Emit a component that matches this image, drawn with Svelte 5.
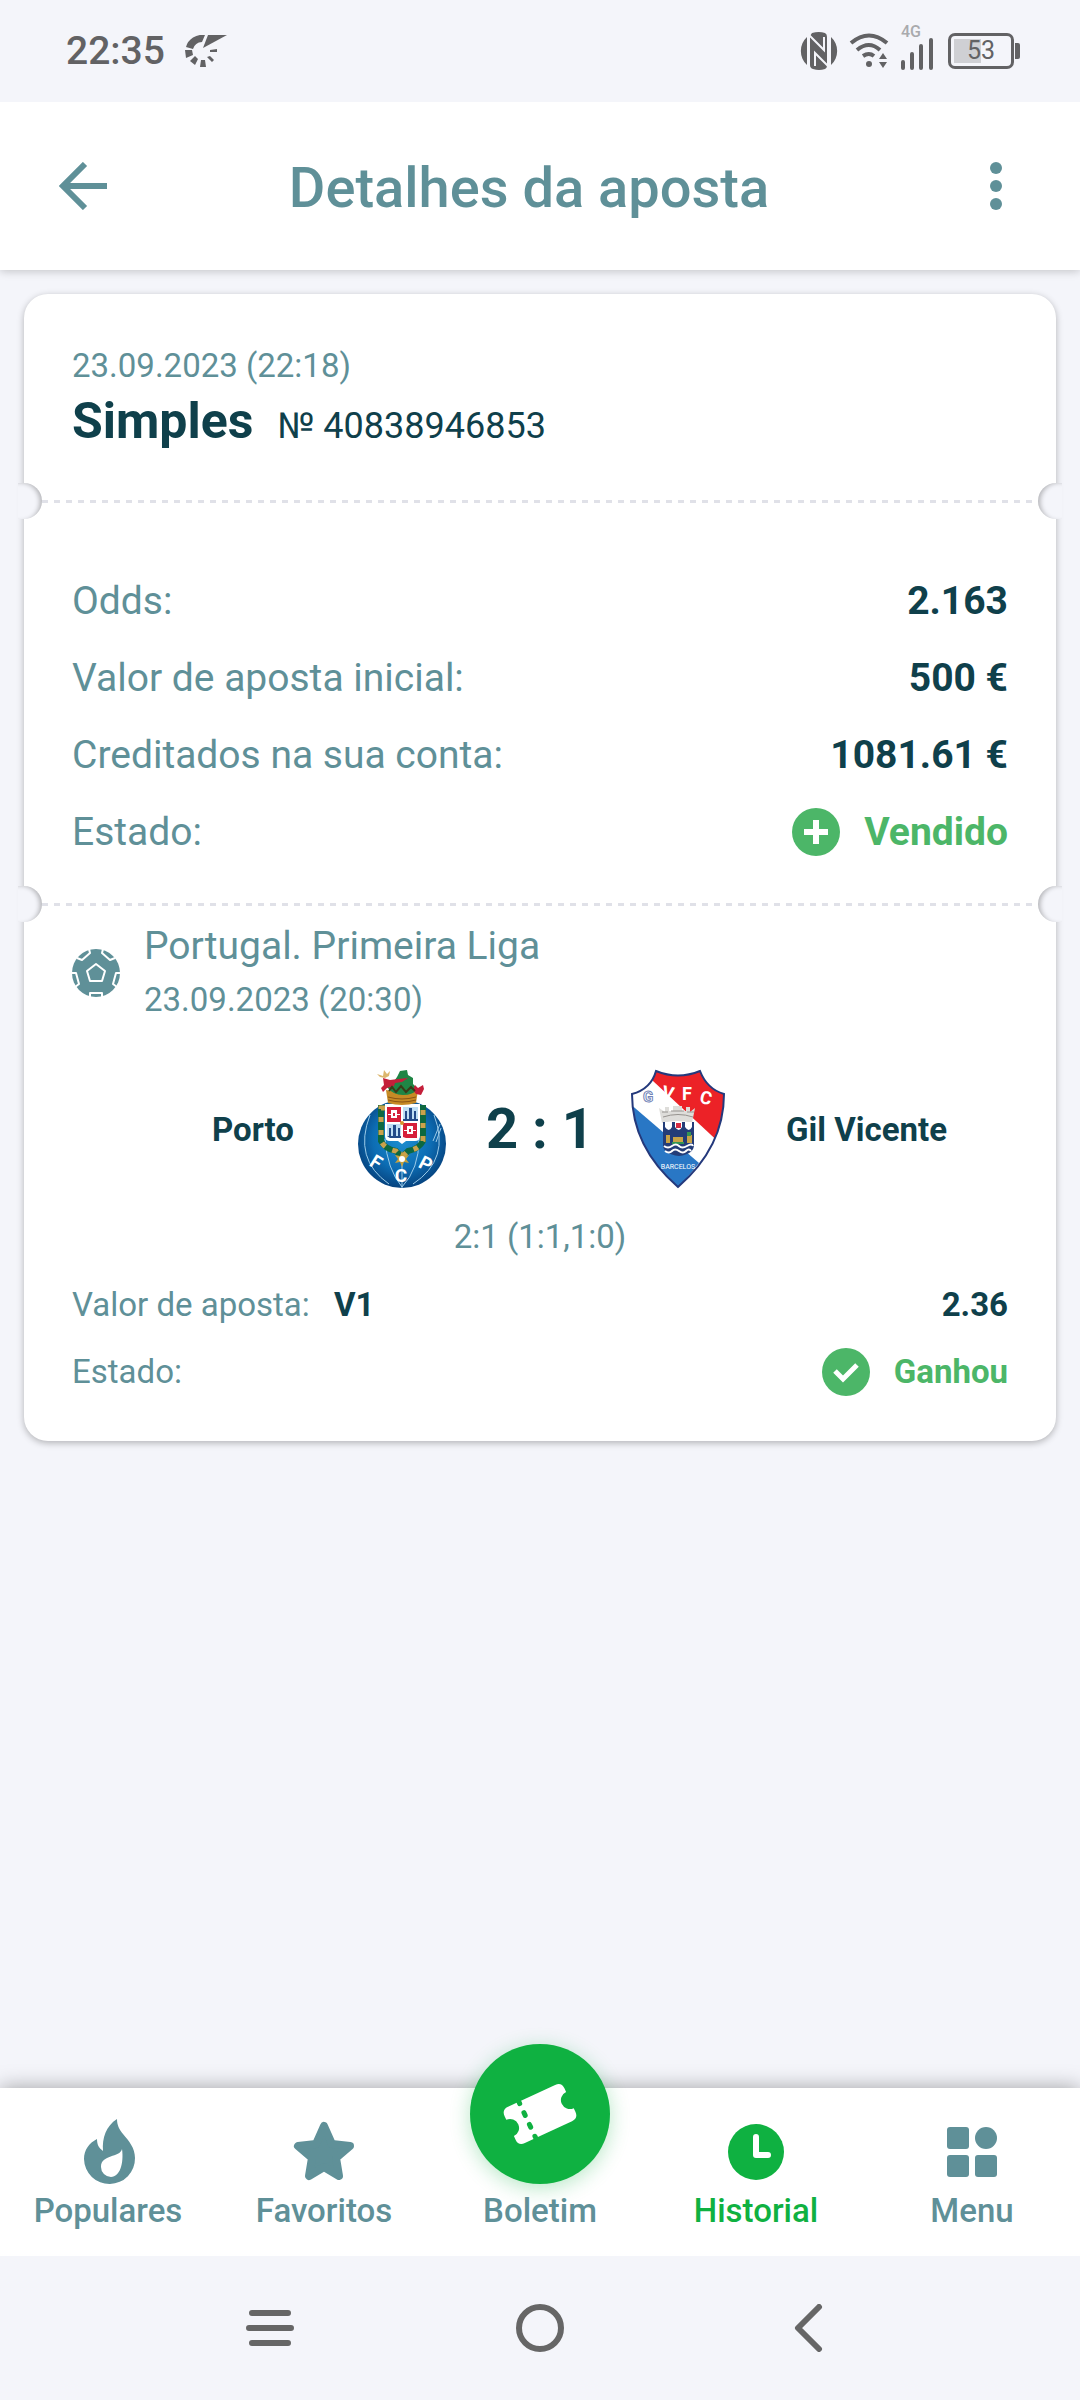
<script lang="ts">
	const bet = {
		date: '23.09.2023 (22:18)',
		type: 'Simples',
		number: '№ 40838946853'
	};

	const summary = [
		{ label: 'Odds:', value: '2.163' },
		{ label: 'Valor de aposta inicial:', value: '500 €' },
		{ label: 'Creditados na sua conta:', value: '1081.61 €' }
	];

	const tabs = [
		{ id: 'popular', label: 'Populares' },
		{ id: 'favorites', label: 'Favoritos' },
		{ id: 'slip', label: 'Boletim' },
		{ id: 'history', label: 'Historial' },
		{ id: 'menu', label: 'Menu' }
	];

	let activeTab = $state('history');
</script>

{#snippet divider()}
	<div class="divider">
		<span class="notch left"></span>
		<span class="dashes"></span>
		<span class="notch right"></span>
	</div>
{/snippet}

<div class="page">
	<div class="status-bar">
		<span class="clock">22:35</span>
		<svg class="app-icon" width="42" height="32" viewBox="0 0 42 32" fill="#626264">
			<path d="M23 0h19L18 13z" />
			<path d="M20 0A17 16 0 0 0 1 12l7 2A10 10 0 0 1 17 7z" />
			<path d="M0 15h7l1 5-7 3zM5 26l5-5 3 3-3 6zM16 25h4l1 7h-6zM22 22l3-1 4 4-2 2zM25 15l7-1v3l-7 0z" />
		</svg>
		<div class="status-icons">
			<svg width="38" height="38" viewBox="0 0 38 38">
				<path fill="#626264" d="M7 5v28A19 19 0 0 1 7 5zM31 5v28A19 19 0 0 0 31 5z" />
				<path fill="#626264" d="M12 1Q19-1 25 1 27 2 27 5V34Q27 36 25 37 19 39 13 37 10 36 10 33V4z" />
				<path fill="none" stroke="#f4f5fa" stroke-width="2" d="M9 3l15 15V5M28 34L15 21v13" />
			</svg>
			<svg width="40" height="38" viewBox="0 0 40 38" fill="none" stroke="#626264" stroke-width="4">
				<path d="M2 11Q20-4 38 11M8 18Q20 8 31 18M14 24Q20 20 25 24" />
				<circle cx="20" cy="32" r="3" fill="#626264" stroke="none" />
				<path fill="#626264" stroke="none" d="M30 27l4-6 4 6zM30 30h8l-4 6z" />
			</svg>
			<div class="signal">
				<span>4G</span>
				<svg width="34" height="32" viewBox="0 0 34 32" stroke="#626264" stroke-width="4" stroke-linecap="round">
					<path d="M3 24v6M12 16v14M21 8v22M31 2v28" />
				</svg>
			</div>
			<div class="battery"><span>53</span></div>
		</div>
	</div>

	<header>
		<button class="back" aria-label="Voltar">
			<svg width="48" height="48" viewBox="0 0 48 48" fill="none" stroke="#5f9098" stroke-width="6">
				<path d="M48 24H5M26 2L4 24l22 22" />
			</svg>
		</button>
		<h1>Detalhes da aposta</h1>
		<button class="more" aria-label="Mais opções">
			<svg width="12" height="48" viewBox="0 0 12 48" fill="#5f9098">
				<circle cx="6" cy="6" r="6" />
				<circle cx="6" cy="24" r="6" />
				<circle cx="6" cy="42" r="6" />
			</svg>
		</button>
	</header>

	<main>
		<article class="ticket">
			<section class="heading">
				<p class="small">{bet.date}</p>
				<div class="bet-name">
					<h2>{bet.type}</h2>
					<span>{bet.number}</span>
				</div>
			</section>

			{@render divider()}

			<dl class="summary">
				{#each summary as row}
					<div class="row">
						<dt>{row.label}</dt>
						<dd>{row.value}</dd>
					</div>
				{/each}
				<div class="row">
					<dt>Estado:</dt>
					<dd class="state">
						<svg width="48" height="48" viewBox="0 0 48 48">
							<circle cx="24" cy="24" r="24" fill="#4cb668" />
							<path d="M24 12v24M12 24h24" stroke="#fff" stroke-width="6" />
						</svg>
						Vendido
					</dd>
				</div>
			</dl>

			{@render divider()}

			<section class="event">
				<div class="league">
					<svg width="48" height="48" viewBox="0 0 48 48">
						<circle cx="24" cy="24" r="24" fill="#5f9098" />
						<g fill="none" stroke="#fff" stroke-width="2" stroke-linejoin="round">
							<path d="M24 15l9 7-3 10H18l-3-10z" />
							<path d="M17 0l1 4-8 7-5-2M31 0l-1 4 8 7 5-2M0 24h4l3 11-4 3M48 24h-4l-3 11 4 3M18 48v-4h12v4" />
						</g>
					</svg>
					<div>
						<p class="league-name">Portugal. Primeira Liga</p>
						<p class="small">23.09.2023 (20:30)</p>
					</div>
				</div>

				<div class="match">
					<strong class="home">Porto</strong>
					<svg width="118" height="120" viewBox="0 0 118 120">
						<defs>
							<radialGradient id="ball" cx="50%" cy="45%" r="55%">
								<stop offset="0" stop-color="#1d8fd0" />
								<stop offset="60%" stop-color="#0d6db4" />
								<stop offset="100%" stop-color="#06437f" />
							</radialGradient>
						</defs>
						<circle cx="59" cy="75" r="44" fill="url(#ball)" />
						<g fill="none" stroke="#9ccbe8" stroke-width="1">
							<path d="M42 70Q44 100 59 118Q76 100 76 70M27 46Q10 90 46 115M91 46Q108 90 70 115M59 90V119M90 72l7-17M93 73l5-14" />
						</g>
						<path fill="none" stroke="#0d6840" stroke-width="6" d="M42 39h-4V72q4 8 15 10l6 6 6-6q11-2 15-10V39h-4" />
						<path fill="none" stroke="#caa14c" stroke-width="5" stroke-dasharray="5 8" d="M42 39h-4V72q4 8 15 10l6 6 6-6q11-2 15-10V39h-4" />
						<path fill="#fff" d="M42 35h35v32q0 5-5 5h-9l-4 3-4-3h-8q-5 0-5-5z" />
						<g fill="#d61f3a">
							<path d="M44 38h14v15H44zM60 54h14v15H63l-3-1z" />
						</g>
						<path fill="#bfdef3" d="M60 38h15v14H60zM44 55h14v14H47l-3-2z" />
						<g fill="#fff">
							<path d="M48 41h6v8h-6zM64 57h6v8h-6zM45 45h12v1H45zM61 61h12v1H61z" />
						</g>
						<path fill="#d61f3a" d="M50 44h2v3h-2zM66 60h2v3h-2z" />
						<path fill="#234a88" d="M62 42h2v8h-2zM66 39h3v11h-3zM71 42h2v8h-2zM46 59h2v8h-2zM50 56h3v11h-3zM55 59h2v8h-2zM60 50h15v2H60zM44 67h14v2H47z" />
						<circle cx="59" cy="54" r="2" fill="#d6932e" />
						<path d="M59 82l2 5 5-1-3 4 3 4-5-1-2 5-2-5-5 1 3-4-3-4 5 1z" fill="#c7a13d" />
						<circle cx="59" cy="90" r="3" fill="#fff" />
						<path fill="#c78a25" d="M43 21q16 4 32 0l-2 13q-14 4-28 0z" />
						<path fill="none" stroke="#8a5415" stroke-width="1" d="M45 28q14 4 28 0M45 31q14 4 28 0" />
						<path fill="#1f8545" d="M44 18q7-5 10-10l3-6 7-1 1 5 5 3v6l5 5q-5 6-15 6T44 18z" />
						<path fill="#c41f3a" d="M40 9l7 2 8-1 10-1-6 4-7 1-1 3-7 2-4 4-2-4 3-3zM72 16l3 3 5-3 1 4-3 6-5-1-3-4z" />
						<path fill="#dcb66e" d="M34 5l6 2 1-6 3 4 3-3-1 5-4 2-5-1z" />
						<path fill="none" stroke="#3b3a17" stroke-width="2" d="M46 22l3-4 4 5 5-6 5 6 5-5 4 4" />
						<g fill="#fff" font-family="Roboto, sans-serif" font-weight="700" font-size="19" text-anchor="middle">
							<text x="33" y="101" transform="rotate(32 35 94)">F</text>
							<text x="58" y="113">C</text>
							<text x="83" y="101" transform="rotate(28 82 94)">P</text>
						</g>
					</svg>
					<strong class="score">2 : 1</strong>
					<svg width="118" height="120" viewBox="0 0 118 120">
						<defs>
							<clipPath id="shield">
								<path d="M37 2Q59 11 81 2 88 20 105 25 105 78 59 118 13 78 13 25 32 20 37 2z" />
							</clipPath>
						</defs>
						<g clip-path="url(#shield)">
							<path fill="#fff" d="M0 0h118v120H0z" />
							<path fill="#ec2227" d="M34 0h84v90L34 12z" />
							<path fill="#2977c5" d="M10 34l70 60-21 26H0z" />
						</g>
						<path fill="none" stroke="#24397c" stroke-width="2" d="M37 2Q59 11 81 2 88 20 105 25 105 78 59 118 13 78 13 25 32 20 37 2z" />
						<path fill="#deddda" d="M40 39l6 4v-5h4v4h4v-5h9v5h4v-4h4v5l5-4-3 15q-14-4-30 0z" />
						<path fill="none" stroke="#96938f" stroke-width="1" d="M44 48q15-5 30 0M43 43h6M52 42h13M68 43h7" />
						<path fill="#243d78" d="M44 53h31v23q0 9-15 11-16-2-16-11z" />
						<path fill="#fff" d="M46 53h7v5q-3 6-7 0zM56 53h7v5q-3 6-7 0zM66 53h7v5q-3 6-7 0z" />
						<path fill="#d52b42" d="M57 54h5v5h-5z" />
						<path fill="#c8a347" d="M47 66h4v8h-4zM54 68h10v6H54zM68 66h5v8h-5z" />
						<path fill="#349454" d="M68 63h4v4h-4zM53 73h12v2H53z" />
						<path fill="none" stroke="#fff" stroke-width="2" d="M45 77q4 3 8 0t7 0 8 0 6 0M46 82q4 3 7 0t7 0 7 0 5 0" />
						<g fill="#fff" font-family="Roboto, sans-serif" font-weight="700" font-size="18" text-anchor="middle">
							<text x="49" y="30" transform="rotate(12 49 24)">V</text>
							<text x="68" y="31">F</text>
							<text x="87" y="35" transform="rotate(14 87 29)">C</text>
							<text x="29" y="33" font-size="15" stroke="#7183b7" stroke-width="1">G</text>
							<text x="59" y="100" font-size="7" font-weight="400">BARCELOS</text>
						</g>
					</svg>
					<strong class="away">Gil Vicente</strong>
				</div>

				<p class="periods small">2:1 (1:1,1:0)</p>

				<dl class="pick">
					<div class="row">
						<dt>Valor de aposta: <b>V1</b></dt>
						<dd>2.36</dd>
					</div>
					<div class="row">
						<dt>Estado:</dt>
						<dd class="state">
							<svg width="48" height="48" viewBox="0 0 48 48">
								<circle cx="24" cy="24" r="24" fill="#4cb668" />
								<path d="M13 23l8 8 14-14" fill="none" stroke="#fff" stroke-width="5" />
							</svg>
							Ganhou
						</dd>
					</div>
				</dl>
			</section>
		</article>
	</main>

	<nav class="tabs">
		{#each tabs as tab}
			<button class:active={tab.id === activeTab} onclick={() => (activeTab = tab.id)}>
				{#if tab.id === 'slip'}
					<span class="fab">
						<svg width="80" height="80" viewBox="0 0 80 80">
							<g transform="rotate(-25 40 40)">
								<path
									fill="#fff"
									d="M14 20H66Q73 20 73 27V31A9 9 0 0 0 73 49V53Q73 60 66 60H14Q7 60 7 53V49A9 9 0 0 0 7 31V27Q7 20 14 20z"
								/>
								<path stroke="#0fb141" stroke-width="5" stroke-linecap="round" d="M26 20v2M26 32v3M26 45v3M26 58v2" />
							</g>
						</svg>
					</span>
				{:else}
					<svg width="72" height="72" viewBox="0 0 72 72" fill="currentColor">
						{#if tab.id === 'popular'}
							<path
								fill-rule="evenodd"
								d="M45 3c0 6 2 10 6 15 6 7 12 14 12 24a25 25 0 0 1-51 1c0-9 5-16 13-20 0 6 2 9 6 12C30 22 34 10 45 3zM50 33c-2 9-21 5-21 18a10 10 0 0 0 10 10c9 0 13-14 11-28z"
							/>
						{:else if tab.id === 'favorites'}
							<path
								stroke="currentColor"
								stroke-width="8"
								stroke-linejoin="round"
								d="M36 10l8 18 18 2-14 12 3 18-15-9-15 9 3-18-14-12 18-2z"
							/>
						{:else if tab.id === 'history'}
							<circle cx="36" cy="36" r="28" />
							<path fill="none" stroke="#fff" stroke-width="6" stroke-linecap="round" stroke-linejoin="round" d="M36 21v18h12" />
						{:else}
							<rect x="11" y="11" width="22" height="22" rx="3" />
							<circle cx="50" cy="22" r="11" />
							<rect x="11" y="39" width="22" height="22" rx="3" />
							<rect x="39" y="39" width="22" height="22" rx="3" />
						{/if}
					</svg>
				{/if}
				<span class="tab-label">{tab.label}</span>
			</button>
		{/each}
	</nav>

	<div class="system-nav">
		<button aria-label="Recentes">
			<svg width="48" height="48" viewBox="0 0 48 48">
				<path d="M6 9h36M3 24h42M6 39h36" />
			</svg>
		</button>
		<button aria-label="Início">
			<svg width="48" height="48" viewBox="0 0 48 48">
				<circle cx="24" cy="24" r="21" />
			</svg>
		</button>
		<button aria-label="Anterior">
			<svg width="48" height="48" viewBox="0 0 48 48">
				<path d="M33 3L12 24l21 21" />
			</svg>
		</button>
	</div>
</div>

<style>
	:global(body) {
		margin: 0;
		background: #f4f5fa;
	}

	.page {
		display: flex;
		flex-direction: column;
		min-height: 100vh;
		background: #f4f5fa;
		color: #5f9098;
		font-family: Roboto, 'Liberation Sans', sans-serif;
		font-size: 39px;
	}

	h1,
	h2,
	p,
	dl,
	dd {
		margin: 0;
	}

	svg {
		display: block;
		flex: none;
	}

	button {
		padding: 0;
		border: none;
		background: transparent;
		color: inherit;
		font: inherit;
		cursor: pointer;
	}

	.status-bar {
		display: flex;
		align-items: center;
		height: 102px;
		padding: 0 60px 0 66px;
		color: #626264;
	}

	.clock {
		font-weight: 500;
	}

	.app-icon {
		margin-left: 20px;
	}

	.status-icons {
		display: flex;
		align-items: flex-end;
		gap: 11px;
		margin-left: auto;
	}

	.signal {
		display: flex;
		flex-direction: column;
		height: 38px;
		justify-content: flex-end;
	}

	.signal span {
		padding-left: 1px;
		font-size: 16px;
		font-weight: 500;
		line-height: 12px;
		color: #a9aaad;
	}

	.battery {
		display: flex;
		align-items: center;
		justify-content: center;
		position: relative;
		box-sizing: border-box;
		width: 66px;
		height: 36px;
		margin: 0 6px 1px 3px;
		border: 3px solid #626264;
		border-radius: 7px;
		background: linear-gradient(90deg, #cfd0d4 50%, transparent 50%) 3px 3px / 54px 24px no-repeat;
		font-size: 25px;
		line-height: 30px;
	}

	.battery::after {
		content: '';
		position: absolute;
		right: -9px;
		top: 7px;
		width: 5px;
		height: 16px;
		border-radius: 0 2px 2px 0;
		background: #626264;
	}

	header {
		display: flex;
		align-items: center;
		height: 168px;
		padding: 0 39px 0 59px;
		background: #fff;
		box-shadow: 0 1px 9px rgba(0, 0, 0, 0.22);
		clip-path: inset(0 0 -20px);
	}

	h1 {
		flex: 1;
		padding-top: 4px;
		font-size: 56px;
		font-weight: 500;
		line-height: 72px;
		text-align: center;
	}

	.more {
		display: flex;
		justify-content: center;
		width: 90px;
	}

	main {
		flex: 1;
		padding: 24px;
	}

	.ticket {
		border-radius: 24px;
		background: #fff;
		box-shadow: 0 2px 7px rgba(0, 0, 0, 0.28);
	}

	.heading {
		height: 141px;
		padding: 48px 48px 0;
	}

	.small {
		font-size: 33px;
		line-height: 48px;
	}

	.bet-name {
		display: flex;
		align-items: baseline;
		gap: 24px;
		color: #0f404b;
		font-size: 36px;
		line-height: 62px;
	}

	h2 {
		font-size: 50px;
		font-weight: 700;
	}

	.divider {
		display: flex;
		align-items: center;
		height: 36px;
		margin: 0 -6px;
	}

	.notch {
		width: 24px;
		height: 36px;
		background: #f4f5fa;
	}

	.notch.left {
		border-radius: 0 18px 18px 0;
		box-shadow: inset -4px 1px 5px -2px rgba(0, 0, 0, 0.28);
	}

	.notch.right {
		border-radius: 18px 0 0 18px;
		box-shadow: inset 4px 1px 5px -2px rgba(0, 0, 0, 0.28);
	}

	.dashes {
		flex: 1;
		height: 3px;
		background: repeating-linear-gradient(90deg, #e0e1e8 0 6px, transparent 6px 12px);
	}

	.row {
		display: flex;
		align-items: center;
		justify-content: space-between;
	}

	.row dd {
		color: #0f404b;
		font-weight: 700;
	}

	.row .state {
		display: flex;
		align-items: center;
		gap: 24px;
		color: #4cb668;
	}

	.summary {
		padding: 43px 48px 16px;
	}

	.summary .row {
		height: 77px;
	}

	.event {
		padding: 0 48px 36px;
	}

	.league {
		display: flex;
		align-items: center;
		gap: 24px;
	}

	.league-name {
		line-height: 48px;
		padding-bottom: 6px;
	}

	.match {
		display: grid;
		grid-template-columns: 1fr 118px 158px 118px 1fr;
		align-items: center;
		margin-top: 45px;
		color: #0f404b;
		font-size: 33px;
	}

	.home {
		padding-right: 49px;
		text-align: right;
	}

	.away {
		padding-left: 49px;
	}

	.score {
		font-size: 56px;
		text-align: center;
	}

	.periods {
		margin-top: 24px;
		text-align: center;
	}

	.pick {
		margin-top: 10px;
		font-size: 33px;
	}

	.pick .row {
		height: 67px;
	}

	.pick b {
		margin-left: 16px;
		color: #0f404b;
	}

	.tabs {
		display: grid;
		grid-template-rows: 100%;
		grid-template-columns: repeat(5, 1fr);
		height: 168px;
		background: #fff;
		box-shadow: 0 0 20px rgba(0, 0, 0, 0.35);
		clip-path: inset(-80px 0 0);
	}

	.tabs button {
		display: flex;
		flex-direction: column;
		align-items: center;
		justify-content: flex-end;
		box-sizing: border-box;
		min-height: 0;
		padding-bottom: 22px;
	}

	.tabs .active {
		color: #0fb141;
	}

	.tab-label {
		font-size: 33px;
		font-weight: 500;
		line-height: 46px;
	}

	.fab {
		display: flex;
		flex: none;
		align-items: center;
		justify-content: center;
		width: 140px;
		height: 140px;
		margin-top: -48px;
		margin-bottom: 4px;
		border-radius: 50%;
		background: #0fb141;
		box-shadow: 0 4px 20px rgba(15, 177, 65, 0.3);
	}

	.system-nav {
		display: grid;
		grid-template-columns: repeat(3, 1fr);
		height: 144px;
		padding: 0 135px;
	}

	.system-nav button {
		display: flex;
		align-items: center;
		justify-content: center;
	}

	.system-nav svg {
		fill: none;
		stroke: #666;
		stroke-width: 6;
		stroke-linecap: round;
		stroke-linejoin: round;
	}
</style>
